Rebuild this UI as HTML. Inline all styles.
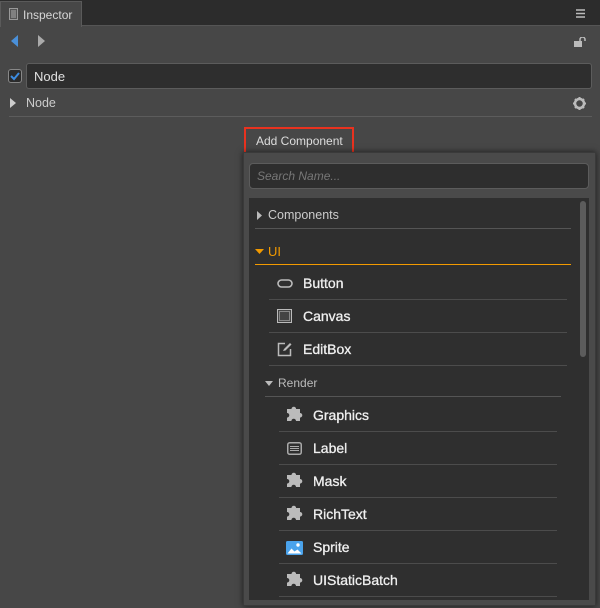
<!DOCTYPE html>
<html><head><style>
*{margin:0;padding:0;box-sizing:border-box}
body{width:600px;height:608px;background:#474747;font-family:"Liberation Sans",sans-serif;position:relative;overflow:hidden;font-size:12px;color:#ccc}
.a{position:absolute}
.line{position:absolute;height:1px;background:#5a5a5a}
.it{position:absolute;font-size:14px;color:#f0f0f0;font-weight:normal;-webkit-text-stroke:0.3px #f0f0f0}
</style></head><body>
<div class="a" style="left:0;top:0;width:600px;height:26px;background:#2c2c2c;border-bottom:1px solid #555"></div>
<div class="a" style="left:0;top:1px;width:82px;height:26px;background:#474747;border:1px solid #5a5a5a;border-bottom:none"></div>
<svg class="a" style="left:9px;top:8px" width="9" height="12"><rect x="0.5" y="0.5" width="8" height="11" fill="#555" stroke="#999"/><path d="M2 3h5M2 5h5M2 7h5M2 9h5" stroke="#aaa"/></svg>
<div class="a" style="left:23px;top:8px;font-size:12px;color:#d6d6d6">Inspector</div>
<svg class="a" style="left:576px;top:9px" width="9" height="9"><path d="M0 1h9M0 4.5h9M0 8h9" stroke="#bbb" stroke-width="1.5"/></svg>
<svg class="a" style="left:11px;top:35px" width="8" height="12"><path d="M7 0v12L0 6z" fill="#4a90d9"/></svg>
<svg class="a" style="left:38px;top:35px" width="8" height="12"><path d="M0 0v12L7 6z" fill="#aaa"/></svg>
<svg class="a" style="left:574px;top:37px" width="13" height="11"><rect x="0" y="4" width="8" height="6" fill="#bbb"/><path d="M6 4V2.5a2.5 2.5 0 0 1 5 0V4" stroke="#bbb" stroke-width="1.5" fill="none"/></svg>
<div class="a" style="left:8px;top:69px;width:14px;height:14px;border:1px solid #888;border-radius:3px;background:#2b2b2b"></div>
<svg class="a" style="left:9px;top:70px" width="12" height="12"><path d="M2 6l3 3 5-6" stroke="#3c8be0" stroke-width="2" fill="none"/></svg>
<div class="a" style="left:26px;top:63px;width:566px;height:26px;background:#2e2e2e;border:1px solid #5c5c5c;border-radius:3px"></div>
<div class="a" style="left:34px;top:69px;font-size:13px;color:#e0e0e0">Node</div>
<svg class="a" style="left:10px;top:98px" width="6" height="10"><path d="M0 0v10L6 5z" fill="#ccc"/></svg>
<div class="a" style="left:26px;top:96px;font-size:12.5px;color:#ccc">Node</div>
<svg class="a" style="left:573px;top:97px" width="13" height="13" viewBox="0 0 13 13"><circle cx="6.5" cy="6.5" r="4.5" fill="none" stroke="#bbb" stroke-width="2.5"/><path d="M6.5 0v13M0 6.5h13M2 2l9 9M11 2l-9 9" stroke="#bbb" stroke-width="2" stroke-dasharray="2 9 2 0"/></svg>
<div class="line" style="left:9px;top:116px;width:583px;background:#5c5c5c"></div>
<div class="a" style="left:244px;top:127px;width:110px;height:27px;border:2px solid #e8321f;background:#474747"></div>
<div class="a" style="left:256px;top:134px;font-size:12px;color:#ddd">Add Component</div>
<div class="a" style="left:243px;top:152px;width:353px;height:454px;background:#4a4a4a;border:1px solid #3a3a3a;box-shadow:0 0 6px rgba(0,0,0,.6)"></div>
<div class="a" style="left:249px;top:163px;width:340px;height:26px;background:#2e2e2e;border:1px solid #5c5c5c;border-radius:4px"></div>
<div class="a" style="left:257px;top:169px;font-size:12px;color:#777;font-style:italic">Search Name...</div>
<div class="a" style="left:249px;top:198px;width:340px;height:402px;background:#2f2f2f"></div>
<div class="a" style="left:580px;top:201px;width:6px;height:156px;background:#5c5c5c;border-radius:3px"></div>
<svg class="a" style="left:257px;top:211px" width="6" height="9"><path d="M0 0v9L5 4.5z" fill="#bbb"/></svg>
<div class="a" style="left:268px;top:208px;font-size:12.5px;color:#ccc">Components</div>
<div class="line" style="left:255px;top:228px;width:316px;background:#555"></div>
<svg class="a" style="left:255px;top:249px" width="9" height="6"><path d="M0 0h9L4.5 5z" fill="#f29a00"/></svg>
<div class="a" style="left:268px;top:244px;font-size:13px;color:#f29a00">UI</div>
<div class="line" style="left:255px;top:264px;width:316px;background:#f29a00"></div>
<svg class="a" style="left:277px;top:279px" width="16" height="9"><rect x="1" y="1" width="14" height="7" rx="3.5" fill="none" stroke="#bbb" stroke-width="1.6"/></svg>
<div class="it" style="left:303px;top:275px">Button</div>
<div class="line" style="left:269px;top:299px;width:298px;background:#4c4c4c"></div>
<svg class="a" style="left:277px;top:309px" width="15" height="14"><rect x="0.5" y="0.5" width="14" height="13" fill="#444" stroke="#bbb"/><rect x="2.5" y="2.5" width="10" height="9" fill="none" stroke="#888"/></svg>
<div class="it" style="left:303px;top:308px">Canvas</div>
<div class="line" style="left:269px;top:332px;width:298px;background:#4c4c4c"></div>
<svg class="a" style="left:277px;top:342px" width="15" height="15"><path d="M8 1.5H1.5v12h12V7" fill="none" stroke="#bbb" stroke-width="1.5"/><path d="M6 9l1-2 6-6 1.5 1.5-6 6z" fill="#bbb"/></svg>
<div class="it" style="left:303px;top:341px">EditBox</div>
<div class="line" style="left:269px;top:365px;width:298px;background:#4c4c4c"></div>
<svg class="a" style="left:265px;top:381px" width="8" height="5"><path d="M0 0h8L4 5z" fill="#bbb"/></svg>
<div class="a" style="left:278px;top:376px;font-size:12px;color:#bbb">Render</div>
<div class="line" style="left:265px;top:396px;width:296px;background:#555"></div>

<svg width="0" height="0" style="position:absolute"><defs><path id="pz" d="M1 4h4.5a2.3 2.3 0 1 1 4.6 0H14v4a2.3 2.3 0 1 1 0 4.6V16H10a2.3 2.3 0 1 0-4.6 0H1v-3.4a2.3 2.3 0 1 0 0-4.6z"/></defs></svg>
<svg class="a" style="left:286px;top:405px" width="17" height="17"><use href="#pz" fill="#bbb"/></svg>
<div class="it" style="left:313px;top:407px">Graphics</div>
<div class="line" style="left:279px;top:431px;width:278px;background:#4c4c4c"></div>
<svg class="a" style="left:287px;top:442px" width="15" height="13"><rect x="0.75" y="0.75" width="13.5" height="11.5" rx="2" fill="none" stroke="#aaa" stroke-width="1.5"/><path d="M3 4.5h9M3 6.5h9M3 8.5h9" stroke="#aaa"/></svg>
<div class="it" style="left:313px;top:440px">Label</div>
<div class="line" style="left:279px;top:464px;width:278px;background:#4c4c4c"></div>
<svg class="a" style="left:286px;top:471px" width="17" height="17"><use href="#pz" fill="#bbb"/></svg>
<div class="it" style="left:313px;top:473px">Mask</div>
<div class="line" style="left:279px;top:497px;width:278px;background:#4c4c4c"></div>
<svg class="a" style="left:286px;top:504px" width="17" height="17"><use href="#pz" fill="#bbb"/></svg>
<div class="it" style="left:313px;top:506px">RichText</div>
<div class="line" style="left:279px;top:530px;width:278px;background:#4c4c4c"></div>
<svg class="a" style="left:286px;top:541px" width="17" height="14"><rect x="0" y="0" width="17" height="14" rx="1.5" fill="#4aa3ec"/><path d="M1.5 12.5l4-5 3 3 3-2 4 4z" fill="#fff"/><circle cx="12" cy="4" r="1.7" fill="#fff"/></svg>
<div class="it" style="left:313px;top:539px">Sprite</div>
<div class="line" style="left:279px;top:563px;width:278px;background:#4c4c4c"></div>
<svg class="a" style="left:286px;top:570px" width="17" height="17"><use href="#pz" fill="#bbb"/></svg>
<div class="it" style="left:313px;top:572px">UIStaticBatch</div>
<div class="line" style="left:279px;top:596px;width:278px;background:#4c4c4c"></div>
</body></html>
